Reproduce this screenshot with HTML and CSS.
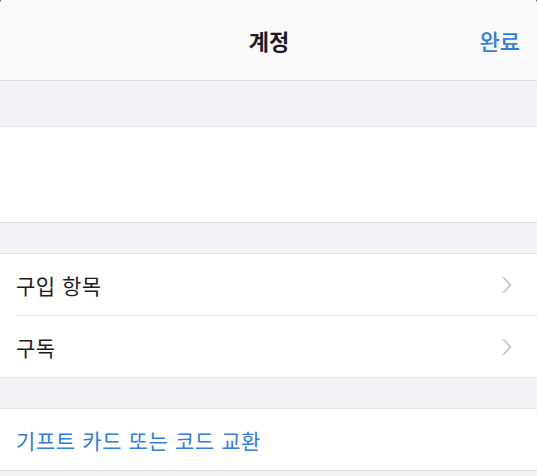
FILE: index.html
```html
<!DOCTYPE html>
<html lang="ko">
<head>
  <meta charset="UTF-8">
  <title>계정</title>
  <link rel="stylesheet" href="styles.css">
</head>
<body>
  <div class="sheet">
    <header class="navbar">
      <span class="nav-side"></span>
      <h1 class="nav-title">계정</h1>
      <a class="nav-done">완료</a>
    </header>

    <div class="gap gap-top"></div>

    <section class="group profile"></section>

    <div class="gap"></div>

    <section class="group">
      <div class="row">
        <span class="row-label">구입 항목</span>
        <svg class="chevron" viewBox="0 0 10 18" width="10" height="18"><path d="M1.5 1.5 L8.5 9 L1.5 16.5" fill="none" stroke="#c4c4c8" stroke-width="1.8" stroke-linecap="round" stroke-linejoin="round"/></svg>
      </div>
      <div class="row">
        <span class="row-label">구독</span>
        <svg class="chevron" viewBox="0 0 10 18" width="10" height="18"><path d="M1.5 1.5 L8.5 9 L1.5 16.5" fill="none" stroke="#c4c4c8" stroke-width="1.8" stroke-linecap="round" stroke-linejoin="round"/></svg>
      </div>
    </section>

    <div class="gap"></div>

    <section class="group">
      <div class="row">
        <a class="row-link">기프트 카드 또는 코드 교환</a>
      </div>
    </section>
  </div>
</body>
</html>
```

FILE: styles.css
```css
body {
  margin: 0;
  background: #000;
  font-family: "Noto Sans CJK KR", "Noto Sans", sans-serif;
  overflow: hidden;
}

.sheet {
  margin-top: -9px;
  background: #f2f2f7;
  border-radius: 14px 14px 0 0;
  height: 485px;
  overflow: hidden;
}

/* Navigation bar */
.navbar {
  display: flex;
  align-items: center;
  justify-content: space-between;
  height: 90px;
  padding: 9px 17px 0 16px;
  box-sizing: border-box;
  background: #f9f9f9;
  border-bottom: 1px solid #dcdcde;
}

.nav-side {
  width: 48px;
}

.nav-title {
  margin: 0;
  font-size: 22px;
  font-weight: 600;
  color: #1c1c1e;
  padding-left: 2px;
}

.nav-done {
  width: 48px;
  text-align: right;
  font-size: 22px;
  font-weight: 500;
  color: #2f7de1;
}

/* Groups */
.gap {
  height: 30px;
}

.gap-top {
  height: 45px;
}

.group {
  background: #fff;
  border-top: 1px solid #e3e3e6;
  border-bottom: 1px solid #e3e3e6;
}

.profile {
  height: 95px;
}

.row {
  display: flex;
  align-items: center;
  justify-content: space-between;
  height: 61px;
  margin-left: 16px;
  padding-right: 25px;
}

.row + .row {
  border-top: 1px solid #e3e3e6;
}

.row-label {
  font-size: 21px;
  letter-spacing: 0.5px;
  color: #1c1c1e;
}

.row-link {
  font-size: 21px;
  letter-spacing: 0.6px;
  color: #2f7de1;
}

.chevron {
  display: block;
}
```
